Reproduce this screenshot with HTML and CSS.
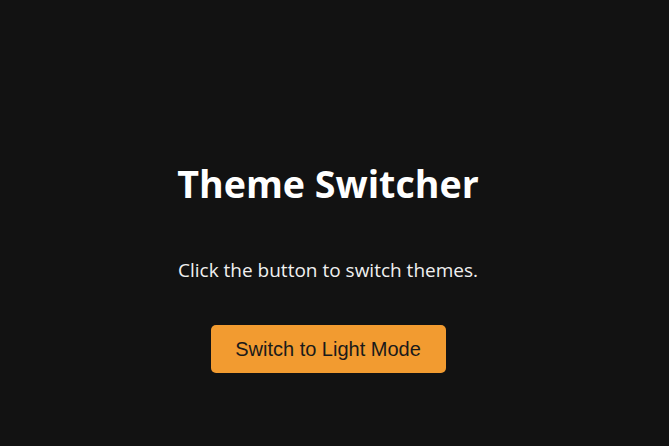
FILE: index.html
```html
<!DOCTYPE html>
<html lang="en">
<head>
<meta charset="utf-8">
<title>Theme Switcher</title>
<link rel="stylesheet" href="styles.css">
</head>
<body>
<main class="page">
  <h1 class="title">Theme Switcher</h1>
  <p class="lead">Click the button to switch themes.</p>
  <button class="toggle" type="button">Switch to Light Mode</button>
</main>
</body>
</html>
```
FILE: styles.css
```css
html, body {
  margin: 0;
  padding: 0;
  background: #121212;
}
.page {
  box-sizing: border-box;
  height: 446px;
  padding: 158px 13px 0 0;
  display: flex;
  flex-direction: column;
  align-items: center;
  text-align: center;
  font-family: "Open Sans", "Noto Sans", sans-serif;
}
.title {
  margin: 0;
  font-size: 37.6px;
  line-height: 52px;
  font-weight: 700;
  color: #ffffff;
}
.lead {
  margin: 47px 0 0;
  font-size: 19px;
  line-height: 26px;
  color: #f0f0f0;
}
.toggle {
  margin-top: 42px;
  width: 235px;
  height: 48px;
  padding: 0;
  border: none;
  border-radius: 5px;
  background: #f29b30;
  color: #1a1a1a;
  font-family: "Liberation Sans", Arial, sans-serif;
  font-size: 20px;
  cursor: pointer;
}
```
